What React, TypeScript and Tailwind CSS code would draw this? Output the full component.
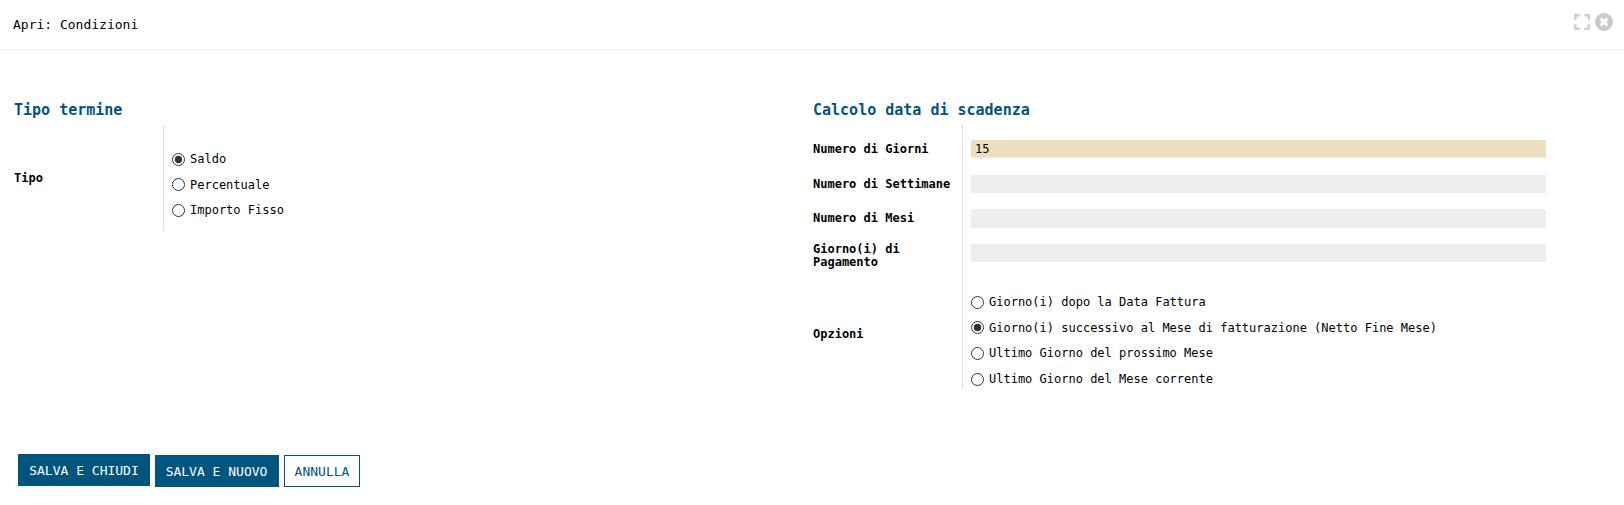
import { useState } from "react";

function Radio({
  label,
  checked,
  onSelect,
  className,
  textClass = "-mt-px",
}: {
  label: string;
  checked: boolean;
  onSelect: () => void;
  className: string;
  textClass?: string;
}) {
  return (
    <label className={`flex items-start gap-[5px] ${className}`}>
      <input type="radio" className="sr-only" checked={checked} onChange={onSelect} />
      <svg viewBox="0 0 13 13" className="h-[13px] w-[13px] shrink-0">
        <circle cx="6.5" cy="6.5" r="6" fill="#fff" stroke="#333" strokeWidth="1" />
        {checked && <circle cx="6.5" cy="6.5" r="3.7" fill="#333" />}
      </svg>
      <span className={`leading-[14px] whitespace-nowrap ${textClass}`}>{label}</span>
    </label>
  );
}

function Field({
  label,
  initial,
  className,
  labelClass = "pt-[3px]",
  inputClass,
}: {
  label: string;
  initial: string;
  className: string;
  labelClass?: string;
  inputClass: string;
}) {
  const [value, setValue] = useState(initial);
  return (
    <div className={`flex items-start ${className}`}>
      <label className={`w-[149px] shrink-0 leading-[13px] font-bold ${labelClass}`}>{label}</label>
      <input
        aria-label={label}
        className={`ml-[9px] w-[575px] px-[4px] outline-none ${inputClass}`}
        value={value}
        onChange={(e) => setValue(e.target.value)}
      />
    </div>
  );
}

export default function App() {
  const [tipo, setTipo] = useState(0);
  const [opzione, setOpzione] = useState(1);

  return (
    <div className="h-[505px] w-[1624px] overflow-hidden bg-white font-['DejaVu_Sans_Mono',monospace] text-[12px] text-black">
      <header className="flex h-[50px] items-start justify-between border-b border-[#ececec] pr-[11px] pl-[13px]">
        <h1 className="mt-[17px] text-[13px] leading-[15px]">Apri: Condizioni</h1>
        <div className="mt-[13px] flex gap-[5px]">
          <svg viewBox="0 0 16 16" className="mt-px h-[16px] w-[16px]" fill="none" stroke="#cecece" strokeWidth="2.5">
            <path d="M1.25 5.7V1.25H5.7M10.3 1.25H14.75V5.7M14.75 10.3V14.75H10.3M5.7 14.75H1.25V10.3" />
          </svg>
          <svg viewBox="0 0 18 18" className="h-[18px] w-[18px]">
            <circle cx="9" cy="9" r="9" fill="#cacaca" />
            <path d="M5.6 5.6L12.4 12.4M12.4 5.6L5.6 12.4" stroke="#fff" strokeWidth="3" />
          </svg>
        </div>
      </header>

      <main className="flex h-[404px] pl-[14px]">
        <section className="w-[799px] pt-[51px]">
          <h2 className="text-[15px] leading-[18px] font-bold text-[#00557f]">Tipo termine</h2>
          <div className="mt-[6px] flex h-[106px]">
            <div className="w-[149px] pt-[46px] leading-[14px] font-bold">Tipo</div>
            <div className="border-l border-[#dddddd] pt-[28px] pl-[8px]">
              <Radio label="Saldo" checked={tipo === 0} onSelect={() => setTipo(0)} className="h-[25px]" />
              <Radio label="Percentuale" checked={tipo === 1} onSelect={() => setTipo(1)} className="h-[26px]" textClass="mt-0" />
              <Radio label="Importo Fisso" checked={tipo === 2} onSelect={() => setTipo(2)} className="h-[14px]" />
            </div>
          </div>
        </section>

        <section className="w-[750px] pt-[51px]">
          <h2 className="text-[15px] leading-[18px] font-bold text-[#00557f]">Calcolo data di scadenza</h2>
          <div className="mt-[6px] h-[263px] bg-linear-to-r from-[#dddddd] to-[#dddddd] bg-[length:1px_100%] bg-[position:149px_0] bg-no-repeat pt-[15px]">
            <Field label="Numero di Giorni" initial="15" className="h-[35px]" inputClass="h-[18px] border-b border-[#f3eddf] bg-[#efdfbd]" />
            <Field label="Numero di Settimane" initial="" className="h-[34px]" inputClass="h-[18px] bg-[#eeeeee]" />
            <Field label="Numero di Mesi" initial="" className="h-[35px]" inputClass="h-[19px] bg-[#eeeeee]" />
            <Field label="Giorno(i) di Pagamento" initial="" className="h-[52px]" labelClass="-mt-px" inputClass="h-[18px] bg-[#eeeeee]" />
            <div className="flex">
              <div className="w-[149px] pt-[31px] leading-[14px] font-bold">Opzioni</div>
              <div className="pl-[9px]">
                <Radio label="Giorno(i) dopo la Data Fattura" checked={opzione === 0} onSelect={() => setOpzione(0)} className="h-[25px]" />
                <Radio label="Giorno(i) successivo al Mese di fatturazione (Netto Fine Mese)" checked={opzione === 1} onSelect={() => setOpzione(1)} className="h-[26px]" textClass="mt-0" />
                <Radio label="Ultimo Giorno del prossimo Mese" checked={opzione === 2} onSelect={() => setOpzione(2)} className="h-[26px]" />
                <Radio label="Ultimo Giorno del Mese corrente" checked={opzione === 3} onSelect={() => setOpzione(3)} className="h-[13px]" />
              </div>
            </div>
          </div>
        </section>
      </main>

      <footer className="flex items-start gap-[5px] pl-[18px] text-[13px] leading-[15px]">
        <button className="h-[32px] w-[132px] bg-[#00557f] text-white">SALVA E CHIUDI</button>
        <button className="mt-px h-[32px] w-[124px] bg-[#00557f] pr-px text-white">SALVA E NUOVO</button>
        <button className="mt-px h-[32px] w-[76px] border border-[#00557f] bg-white text-[#00557f]">ANNULLA</button>
      </footer>
    </div>
  );
}
